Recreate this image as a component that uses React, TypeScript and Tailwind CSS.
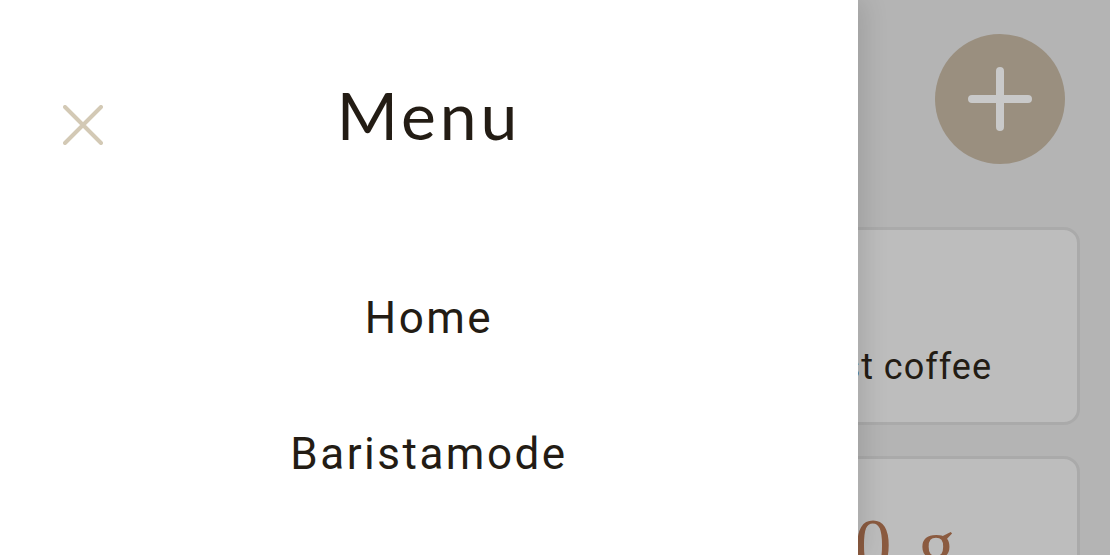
import { useState } from "react";

const menuItems = ["Home", "Baristamode"];

function CloseIcon() {
  return (
    <svg width="40" height="40" viewBox="0 0 40 40" fill="none">
      <path
        d="M2 2 L38 38 M38 2 L2 38"
        stroke="#d3c9b5"
        strokeWidth="4"
        strokeLinecap="round"
      />
    </svg>
  );
}

function PlusIcon() {
  return (
    <svg width="66" height="66" viewBox="0 0 66 66" fill="none">
      <path
        d="M33 5 V61 M5 33 H61"
        stroke="#c9c9c9"
        strokeWidth="8"
        strokeLinecap="round"
      />
    </svg>
  );
}

function Dashboard() {
  return (
    <div className="w-full h-full bg-[#b4b4b4] pt-[34px] pr-[30px] pl-[30px] flex flex-col">
      <div className="flex justify-end pr-[15px]">
        <button className="w-[130px] h-[130px] rounded-full bg-[#9a8f7f] flex items-center justify-center">
          <PlusIcon />
        </button>
      </div>
      <div className="mt-[63px] flex flex-col gap-[31px]">
        <div className="h-[198px] rounded-[16px] border-[3px] border-[#aaaaaa] bg-[#bdbdbd] flex items-end justify-end pr-[85px] pb-[37px]">
          <span
            className="text-[36px] leading-none tracking-[1px] text-[#231c14]"
            style={{ fontFamily: "Roboto, sans-serif" }}
          >
            Roast coffee
          </span>
        </div>
        <div className="h-[198px] rounded-[16px] border-[3px] border-[#aaaaaa] bg-[#bdbdbd] flex items-start justify-end pr-[122px] pt-[49px]">
          <span
            className="text-[74px] leading-none text-[#8b5b40] [word-spacing:8px]"
            style={{ fontFamily: "'Liberation Serif', serif" }}
          >
            18,0 g
          </span>
        </div>
      </div>
    </div>
  );
}

export default function App() {
  const [open, setOpen] = useState(true);

  return (
    <div className="relative w-full h-[555px] overflow-hidden">
      <Dashboard />
      {open && (
        <aside className="absolute left-0 top-0 h-full w-[858px] bg-white shadow-[6px_0_24px_rgba(0,0,0,0.12)] flex flex-col">
          <div className="relative flex items-center justify-center h-[232px] pb-[4px]">
            <button
              className="absolute left-[63px] top-[105px]"
              onClick={() => setOpen(false)}
            >
              <CloseIcon />
            </button>
            <h1
              className="text-[66px] leading-none tracking-[4px] text-[#231c14] mt-[2px]"
              style={{ fontFamily: "Lato, sans-serif" }}
            >
              Menu
            </h1>
          </div>
          <nav className="flex flex-col items-center gap-[92px] pt-[64px]">
            {menuItems.map((item) => (
              <a
                key={item}
                className="text-[44px] leading-none tracking-[2.5px] text-[#231c14]"
                style={{ fontFamily: "Roboto, sans-serif" }}
              >
                {item}
              </a>
            ))}
          </nav>
        </aside>
      )}
    </div>
  );
}
